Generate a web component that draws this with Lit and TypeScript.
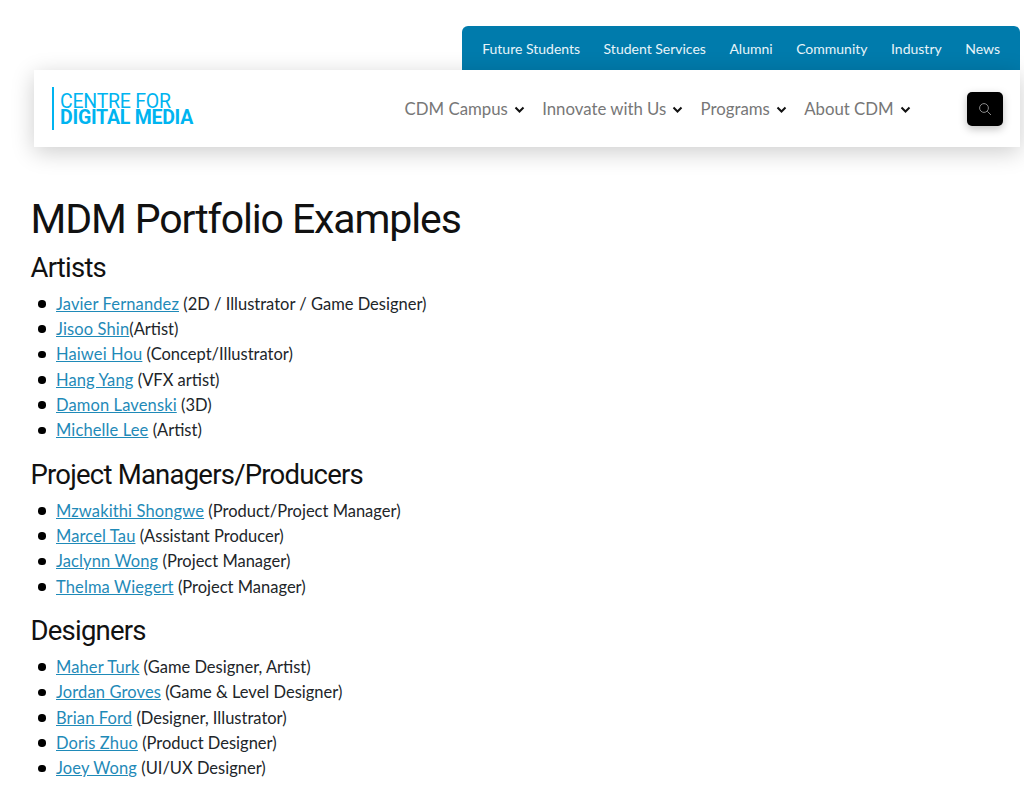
import { LitElement, html, css } from "lit";
import { customElement } from "lit/decorators.js";

type Entry = [string, string];
const sections: { title: string; items: Entry[] }[] = [
  { title: "Artists", items: [
    ["Javier Fernandez", " (2D / Illustrator / Game Designer)"],
    ["Jisoo Shin", "(Artist)"],
    ["Haiwei Hou", " (Concept/Illustrator)"],
    ["Hang Yang", " (VFX artist)"],
    ["Damon Lavenski", " (3D)"],
    ["Michelle Lee", " (Artist)"],
  ]},
  { title: "Project Managers/Producers", items: [
    ["Mzwakithi Shongwe", " (Product/Project Manager)"],
    ["Marcel Tau", " (Assistant Producer)"],
    ["Jaclynn Wong", " (Project Manager)"],
    ["Thelma Wiegert", " (Project Manager)"],
  ]},
  { title: "Designers", items: [
    ["Maher Turk", " (Game Designer, Artist)"],
    ["Jordan Groves", " (Game & Level Designer)"],
    ["Brian Ford", " (Designer, Illustrator)"],
    ["Doris Zhuo", " (Product Designer)"],
    ["Joey Wong", " (UI/UX Designer)"],
  ]},
];
const top = ["Future Students", "Student Services", "Alumni", "Community", "Industry", "News"];
const main = ["CDM Campus", "Innovate with Us", "Programs", "About CDM"];

@customElement("app-root")
export class AppRoot extends LitElement {
  static styles = css`
    :host { display: block; height: 792px; overflow: hidden; background: #fff; font-family: "Lato", "Noto Sans", sans-serif; color: #212529; }
    a { text-decoration: none; color: inherit; }
    header { display: flex; flex-direction: column; align-items: flex-end; padding: 26px 4px 0 34px; }
    .top { display: flex; gap: 23.5px; height: 44px; align-items: center; padding: 0 20px; background: #007bac; border-radius: 6px 6px 0 0; color: #e8f4f9; font-size: 14px; }
    .bar { align-self: stretch; height: 77px; display: flex; align-items: center; background: #fff; box-shadow: 0 5px 22px rgba(0,0,0,.2); padding-left: 17.5px; box-sizing: border-box; }
    .logo { border-left: 2px solid #00b4f0; height: 43px; padding-left: 6.5px; display: flex; flex-direction: column; justify-content: center; color: #00b4f0; font-family: "Roboto", sans-serif; font-size: 19.5px; line-height: 16px; letter-spacing: -0.25px; white-space: nowrap; padding-top: 2px; box-sizing: border-box; }
    .logo b { font-weight: 700; }
    .nav { display: flex; gap: 17.3px; margin-left: 211.5px; color: #777; font-size: 16.8px; }
    .nav a { display: flex; align-items: center; gap: 6px; }
    .nav svg { display: block; margin-top: 3px; }
    .search { margin-left: auto; margin-right: 17px; width: 36px; height: 34px; background: #000; border-radius: 5px; display: flex; align-items: center; justify-content: center; box-shadow: 0 3px 8px rgba(0,0,0,.25); }
    main { padding: 50px 0 0 30.5px; }
    h1, h2 { margin: 0; font-family: "Roboto", sans-serif; font-weight: 400; color: #111; }
    h1 { font-size: 41px; line-height: 44px; letter-spacing: -1.12px; margin-bottom: 10px; }
    h2 { font-size: 27.5px; line-height: 34px; letter-spacing: -0.78px; margin-bottom: 6.5px; }
    ul { margin: 0 0 14.5px; padding: 0 0 0 25.5px; list-style: none; font-size: 16.5px; line-height: 25.35px; }
    li { position: relative; }
    li::before { content: ""; position: absolute; left: -18px; top: 8.5px; width: 7.5px; height: 7.5px; border-radius: 50%; background: #000; }
    ul a { color: #1f8ab8; text-decoration: underline; letter-spacing: 0.12px; }
  `;

  render() {
    return html`
      <header>
        <nav class="top">${top.map((t) => html`<a>${t}</a>`)}</nav>
        <div class="bar">
          <div class="logo"><span>CENTRE FOR</span><b>DIGITAL MEDIA</b></div>
          <nav class="nav">
            ${main.map((t) => html`<a>${t}<svg width="11" height="8" viewBox="0 0 11 8"><path d="M1.5 1.5 5.5 5.5 9.5 1.5" fill="none" stroke="#111" stroke-width="2"/></svg></a>`)}
          </nav>
          <div class="search">
            <svg width="14" height="14" viewBox="0 0 14 14"><circle cx="6" cy="6" r="4.4" fill="none" stroke="#8a8a8a" stroke-width="1"/><path d="M9.3 9.3 13 13" stroke="#8a8a8a" stroke-width="1"/></svg>
          </div>
        </div>
      </header>
      <main>
        <h1>MDM Portfolio Examples</h1>
        ${sections.map((s) => html`
          <h2>${s.title}</h2>
          <ul>${s.items.map(([n, d]) => html`<li><a>${n}</a>${d}</li>`)}</ul>
        `)}
      </main>
    `;
  }
}
